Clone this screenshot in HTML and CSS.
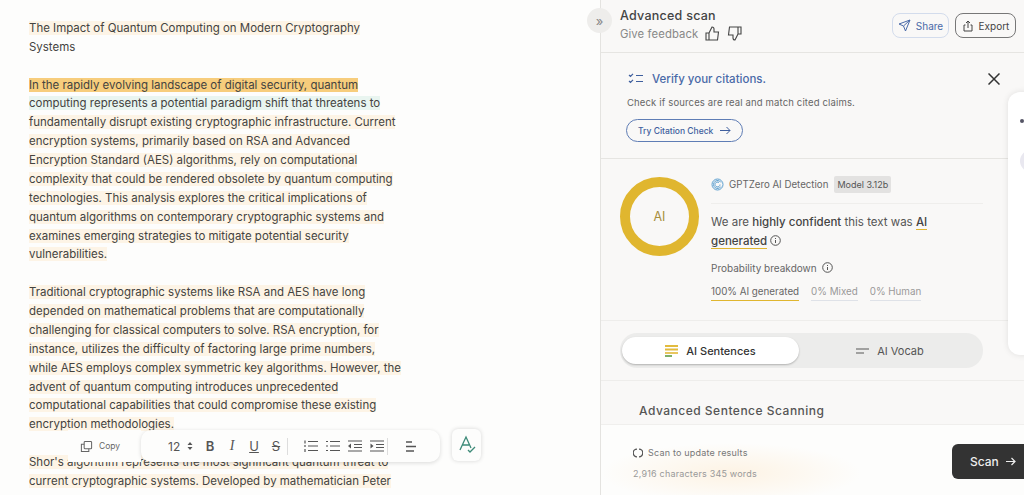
FILE: index.html
```html
<!DOCTYPE html>
<html lang="en">

<head>
    <meta charset="UTF-8">
    <meta name="viewport" content="width=device-width, initial-scale=1.0">
    <title>Advanced scan</title>
    <link rel="stylesheet" href="styles.css">
</head>

<body>
    <div class="page">
        <main class="editor">
            <div class="doc">
                <p><span class="hl">The Impact of Quantum Computing on Modern Cryptography</span><br>Systems</p>
                <p><span class="hl-strong">In the rapidly evolving landscape of digital security, quantum</span><br>
                    <span class="hl-green">computing represents a potential paradigm shift that threatens to</span><br>
                    <span class="hl">fundamentally disrupt existing cryptographic infrastructure. Current</span><br>
                    <span class="hl">encryption systems, primarily based on RSA and Advanced</span><br>
                    <span class="hl">Encryption Standard (AES) algorithms, rely on computational</span><br>
                    <span class="hl">complexity that could be rendered obsolete by quantum computing</span><br>
                    <span class="hl">technologies. This analysis explores the critical implications of</span><br>
                    <span class="hl">quantum algorithms on contemporary cryptographic systems and</span><br>
                    <span class="hl">examines emerging strategies to mitigate potential security</span><br>
                    <span class="hl">vulnerabilities.</span></p>
                <p><span class="hl">Traditional cryptographic systems like RSA and AES have long</span><br>
                    <span class="hl">depended on mathematical problems that are computationally</span><br>
                    <span class="hl">challenging for classical computers to solve. RSA encryption, for</span><br>
                    <span class="hl">instance, utilizes the difficulty of factoring large prime numbers,</span><br>
                    <span class="hl">while AES employs complex symmetric key algorithms. However, the</span><br>
                    <span class="hl">advent of quantum computing introduces unprecedented</span><br>
                    <span class="hl">computational capabilities that could compromise these existing</span><br>
                    <span class="hl">encryption methodologies.</span></p>
                <p><span class="hl">Shor's algorithm represents the most significant quantum threat to</span><br>
                    <span class="hl">current cryptographic systems. Developed by mathematician Peter</span></p>
            </div>

            <div class="toolbar-wrap">
                <div class="copy">
                    <svg width="13" height="13" viewBox="0 0 14 14" fill="none" stroke="#666" stroke-width="1.1"><rect x="4.5" y="1.5" width="8" height="8" rx="1"/><path d="M4.5 4.500h-3v8h8v-3"/></svg>
                    <span>Copy</span>
                </div>
                <div class="toolbar">
                    <span class="size">12 <svg width="6" height="10" viewBox="0 0 6 10" fill="#555"><path d="M3 1l2.500 3h-5zM3 9L.5 6h5z"/></svg></span>
                    <span class="tool bold">B</span>
                    <span class="tool italic">I</span>
                    <span class="tool under">U</span>
                    <span class="tool strike">S</span>
                    <span class="sep"></span>
                    <svg class="ico" width="14" height="12" viewBox="0 0 14 12" stroke="#555" stroke-width="1.2"><path d="M4 1.500h10M4 6h10M4 10.500h10M1 .5v3M1 5v2M1 9v3"/></svg>
                    <svg class="ico" width="14" height="12" viewBox="0 0 14 12" stroke="#555" stroke-width="1.2"><path d="M0 1.500h2M4 1.500h10M0 6h2M4 6h10M0 10.500h2M4 10.500h10"/></svg>
                    <svg class="ico" width="14" height="12" viewBox="0 0 14 12" fill="#555" stroke="#555" stroke-width="1.2"><path d="M0 1h14M6 4.500h8M6 7.500h8M0 11h14"/><path stroke="none" d="M0 6l3-2.500v5z"/></svg>
                    <svg class="ico" width="14" height="12" viewBox="0 0 14 12" fill="#555" stroke="#555" stroke-width="1.2"><path d="M0 1h14M6 4.500h8M6 7.500h8M0 11h14"/><path stroke="none" d="M3.500 6L.5 3.500v5z"/></svg>
                    <span class="sep sep-last"></span>
                    <svg class="ico align" width="12" height="11" viewBox="0 0 12 11" stroke="#555" stroke-width="1.3"><path d="M1 1h6M1 5.500h10M1 10h8"/></svg>
                </div>
                <div class="spell">
                    <svg width="22" height="22" viewBox="0 0 22 22" fill="none" stroke="#3d8a78" stroke-width="1.3"><path d="M4 16L10 3l5 11M6 11h7M12 16l2 2 5-5"/></svg>
                </div>
            </div>
        </main>

        <aside class="panel">
            <button class="collapse">»</button>
            <header class="panel-head">
                <div>
                    <div class="panel-title">Advanced scan</div>
                    <div class="feedback">Give feedback
                        <svg class="thumb" width="15" height="15" viewBox="0 0 15 15" fill="none" stroke="#444" stroke-width="1.1"><path d="M1 7h3v7H1zM4 7l3-6c1.200 0 2 .8 2 2v3h4.500l-1 8H4"/></svg>
                        <svg class="thumb" width="15" height="15" viewBox="0 0 15 15" fill="none" stroke="#444" stroke-width="1.1"><path d="M14 8h-3V1h3zM11 8l-3 6c-1.200 0-2-.8-2-2V9H1.500l1-8H11"/></svg>
                    </div>
                </div>
                <div class="head-btns">
                    <button class="btn-share">
                        <svg width="13" height="13" viewBox="0 0 13 13" fill="none" stroke="#4a6aa8" stroke-width="1"><path d="M12 1L1 5l4.500 2L7.500 12zM12 1L5.500 7"/></svg>
                        Share</button>
                    <button class="btn-export">
                        <svg width="12" height="12" viewBox="0 0 12 12" fill="none" stroke="#444" stroke-width="1"><path d="M3.500 5H2v6h8V5H8.500M6 8V1M4 3l2-2 2 2"/></svg>
                        Export</button>
                </div>
            </header>

            <section class="promo">
                <div class="promo-top">
                    <svg width="16" height="12" viewBox="0 0 16 12" fill="none" stroke="#3f5f9e" stroke-width="1.200"><path d="M1 2l1.500 1.500L5 .8M1 8l1.500 1.500L5 6.800M8 2.500h7M8 8.500h7"/></svg>
                    <span class="promo-title">Verify your citations.</span>
                    <svg class="close" width="12" height="12" viewBox="0 0 12 12" stroke="#333" stroke-width="1.500"><path d="M.5.5l11 11M11.500.5l-11 11"/></svg>
                </div>
                <p class="promo-text">Check if sources are real and match cited claims.</p>
                <button class="btn-try">Try Citation Check
                    <svg width="11" height="9" viewBox="0 0 11 9" fill="none" stroke="#3f5f9e" stroke-width="1"><path d="M0 4.500h10M6.500 1L10 4.500 6.500 8"/></svg>
                </button>
            </section>

            <section class="result">
                <div class="ring">AI</div>
                <div class="result-body">
                    <div class="detect">
                        <svg width="13" height="13" viewBox="0 0 13 13" fill="none" stroke="#5b9fd0" stroke-width="1"><circle cx="6.500" cy="6.500" r="5.500"/><path d="M10 4.500A4 4 0 1 0 10 8.500M9 6.500a2.500 2.500 0 1 1-1-2"/></svg>
                        <span>GPTZero AI Detection</span>
                        <span class="badge">Model 3.12b</span>
                    </div>
                    <p class="verdict">We are <b>highly confident</b> this text was <b class="mark">AI</b><br>
                        <b class="mark">generated</b> <svg class="info" width="11" height="11" viewBox="0 0 11 11" fill="none" stroke="#555"><circle cx="5.500" cy="5.500" r="4.800"/><path d="M5.500 5v3M5.500 3v1"/></svg></p>
                    <div class="breakdown">Probability breakdown <svg class="info" width="11" height="11" viewBox="0 0 11 11" fill="none" stroke="#555"><circle cx="5.500" cy="5.500" r="4.800"/><path d="M5.500 5v3M5.500 3v1"/></svg></div>
                    <div class="probs">
                        <span class="prob active">100% AI generated</span>
                        <span class="prob">0% Mixed</span>
                        <span class="prob">0% Human</span>
                    </div>
                </div>
            </section>

            <section class="tabs-row">
                <div class="tabs">
                    <div class="tab on">
                        <svg width="13" height="12" viewBox="0 0 13 12" stroke-width="2"><path d="M0 1h13" stroke="#e2bb3e"/><path d="M0 4.500h13" stroke="#e2bb3e"/><path d="M0 8h13" stroke="#e8c65e"/><path d="M0 11h7" stroke="#7fb069"/></svg>
                        AI Sentences</div>
                    <div class="tab">
                        <svg width="13" height="6" viewBox="0 0 13 6" stroke="#888" stroke-width="1.300"><path d="M0 1h13M0 5h8"/></svg>
                        AI Vocab</div>
                </div>
            </section>

            <h2 class="scan-title">Advanced Sentence Scanning</h2>

            <footer class="scanbar">
                <div class="scan-info">
                    <div class="scan-note"><svg width="10" height="10" viewBox="0 0 10 10" fill="none" stroke="#555" stroke-width="1.300"><path d="M4 1.200A3.800 3.800 0 0 0 4 8.800M6 1.200A3.800 3.800 0 0 1 6 8.800"/></svg> Scan to update results</div>
                    <div class="scan-count">2,916 characters 345 words</div>
                </div>
                <button class="btn-scan">Scan
                    <svg width="10" height="9" viewBox="0 0 10 9" fill="none" stroke="#eee" stroke-width="1.200"><path d="M0 4.500h9M5.500 1L9 4.500 5.500 8"/></svg>
                </button>
            </footer>

            <div class="float-card">
                <span class="float-dot"></span>
                <span class="float-ring"></span>
            </div>
        </aside>
    </div>
</body>

</html>
```
FILE: styles.css
```css
* {
    box-sizing: border-box;
}

body {
    margin: 0;
    height: 495px;
    overflow: hidden;
    font-family: Inter, 'Liberation Sans', sans-serif;
    color: #3a3a38;
    background-color: #fdfdfc;
}

button {
    font-family: inherit;
    cursor: pointer;
}

.page {
    display: flex;
    height: 495px;
}

.editor {
    position: relative;
    width: 600px;
    overflow: hidden;
}

.doc {
    padding: 19px 0 0 29px;
    font-size: 11.480px;
    line-height: 18.870px;
    color: #444340;
    white-space: nowrap;
}

.doc p {
    margin: 0 0 18.870px;
}

.hl {
    background-color: #fdf4e6;
}

.hl-strong {
    background-color: #f7cd7c;
}

.hl-green {
    background-color: #e9f5f0;
}

.toolbar-wrap {
    position: absolute;
    left: 68px;
    top: 430px;
    display: flex;
    align-items: flex-start;
}

.copy {
    display: flex;
    align-items: center;
    gap: 6px;
    width: 73px;
    height: 32px;
    padding-left: 12px;
    font-size: 8.500px;
    color: #666;
    background-color: #fdfdfc;
}

.toolbar {
    display: flex;
    align-items: center;
    gap: 8px;
    width: 299px;
    height: 32px;
    padding-left: 27px;
    background-color: #fdfdfc;
    border-radius: 10px;
    box-shadow: 0 1px 4px rgba(0, 0, 0, 0.14);
    font-size: 12px;
    color: #555;
}

.size {
    display: flex;
    align-items: center;
    gap: 7px;
    width: 27px;
    flex: none;
}

.size svg {
    flex: none;
}

.tool {
    flex: none;
    width: 14px;
    font-size: 13px;
    text-align: center;
}

.bold {
    font-weight: 600;
}

.italic {
    font-family: 'Liberation Serif', serif;
    font-style: italic;
    font-size: 14px;
}

.under {
    text-decoration: underline;
}

.strike {
    text-decoration: line-through;
}

.sep {
    flex: none;
    width: 1px;
    height: 17px;
    background-color: #ddd;
    margin-left: -4px;
    margin-right: 8px;
}

.sep-last {
    margin-left: -5px;
    margin-right: 0;
}

.ico {
    flex: none;
}

.align {
    margin-left: 9px;
}

.spell {
    display: flex;
    align-items: center;
    justify-content: center;
    width: 29px;
    height: 32px;
    margin-top: -1px;
    margin-left: 12px;
    background-color: #fdfdfc;
    border-radius: 6px;
    box-shadow: 0 0 4px rgba(0, 0, 0, 0.16);
}

.panel {
    position: relative;
    flex: 1;
    background-color: #f9f8f7;
    border-left: 1px solid #e4e3e0;
}

.collapse {
    position: absolute;
    left: -14px;
    top: 8px;
    width: 25px;
    height: 25px;
    padding: 0;
    border: none;
    border-radius: 50%;
    background-color: #eeedeb;
    color: #888;
    font-size: 13px;
    line-height: 22px;
}

.panel-head {
    display: flex;
    justify-content: space-between;
    height: 53px;
    padding: 8px 8px 0 19px;
    border-bottom: 1px solid #e6e5e2;
}

.panel-title {
    font-size: 12.500px;
    font-weight: 500;
    letter-spacing: 0.25px;
    color: #444;
}

.feedback {
    display: flex;
    align-items: center;
    gap: 7px;
    margin-top: 3px;
    font-size: 11.300px;
    letter-spacing: 0.1px;
    color: #888;
}

.thumb {
    flex: none;
}

.head-btns {
    display: flex;
    gap: 6px;
    margin-top: 5px;
}

.head-btns button {
    display: flex;
    align-items: center;
    justify-content: center;
    gap: 5px;
    height: 25px;
    padding: 0;
    font-size: 10px;
    border-radius: 8px;
    background-color: transparent;
}

.btn-share {
    width: 57px;
    color: #4a6aa8;
    border: 1px solid #d3dcec;
}

.btn-export {
    width: 61px;
    color: #444;
    border: 1px solid #777;
}

.promo {
    height: 106px;
    padding: 19px 24px 0 27px;
    border-bottom: 1px solid #e6e5e2;
}

.promo-top {
    display: flex;
    align-items: center;
    gap: 8px;
}

.promo-title {
    font-size: 11.500px;
    font-weight: 500;
    color: #4a6aa8;
}

.close {
    margin-left: auto;
}

.promo-text {
    margin: 11px 0 11px -1px;
    font-size: 9.500px;
    letter-spacing: 0.15px;
    color: #666;
}

.btn-try {
    display: flex;
    align-items: center;
    gap: 7px;
    height: 23px;
    margin-left: -2px;
    padding: 0 11px;
    font-size: 8.500px;
    font-weight: 500;
    color: #3f5f9e;
    background-color: transparent;
    border: 1px solid #5f7db5;
    border-radius: 12px;
}

.result {
    display: flex;
    gap: 12px;
    height: 162px;
    padding: 18px 0 0 19px;
    border-bottom: 1px solid #eeedeb;
}

.ring {
    display: flex;
    align-items: center;
    justify-content: center;
    flex: none;
    width: 79px;
    height: 79px;
    border: 10px solid #e0b62f;
    border-radius: 50%;
    font-size: 12.500px;
    color: #a88f3c;
}

.result-body {
    width: 272px;
}

.detect {
    display: flex;
    align-items: center;
    gap: 5px;
    height: 20px;
    font-size: 9.700px;
    color: #666;
    padding-bottom: 5px;
}

.badge {
    padding: 3px 3px;
    margin-left: 1px;
    font-size: 9px;
    background-color: #e3e2e1;
    border-radius: 2px;
    color: #555;
}

.verdict {
    margin: 6px 0 0;
    padding-top: 9px;
    border-top: 1px solid #efeeec;
    font-size: 11.500px;
    line-height: 19px;
    color: #555;
}

.verdict b {
    font-weight: 500;
    color: #444;
}

.mark {
    border-bottom: 1px solid #e0b62f;
}

.info {
    vertical-align: -1px;
}

.breakdown {
    margin-top: 11px;
    font-size: 10px;
    color: #666;
}

.breakdown .info {
    margin-left: 3px;
}

.probs {
    display: flex;
    gap: 12px;
    margin-top: 12px;
    font-size: 9.800px;
    color: #999;
}

.prob {
    padding-bottom: 3px;
    border-bottom: 1px solid #dfe2e8;
}

.prob.active {
    color: #666;
    border-bottom-color: #e0b62f;
}

.tabs-row {
    height: 60px;
    padding: 12px 0 0 19px;
    border-bottom: 1px solid #eeedeb;
}

.tabs {
    display: flex;
    width: 363px;
    height: 35px;
    padding: 4px 2px;
    background-color: #ececeb;
    border-radius: 17px;
}

.tab {
    display: flex;
    align-items: center;
    justify-content: center;
    gap: 8px;
    flex: 1;
    font-size: 11px;
    color: #555;
}

.tab.on {
    flex: none;
    width: 177px;
    font-weight: 500;
    color: #333;
    background-color: #fff;
    border-radius: 15px;
    box-shadow: 0 1px 2px rgba(0, 0, 0, 0.25);
}

.scan-title {
    margin: 0;
    padding: 22px 0 0 38px;
    font-size: 12px;
    font-weight: 500;
    letter-spacing: 0.5px;
    color: #555;
}

.scanbar {
    position: absolute;
    left: 0;
    right: 0;
    bottom: 0;
    display: flex;
    justify-content: space-between;
    height: 71px;
    padding: 22px 0 0 32px;
    background: radial-gradient(ellipse 130px 30px at 130px 48px, #fdf3e4, transparent), #fdfdfc;
    border-top: 1px solid #f0efed;
}

.scan-note {
    display: flex;
    align-items: center;
    gap: 5px;
    font-size: 9px;
    letter-spacing: 0.2px;
    color: #777;
}

.scan-count {
    margin-top: 10px;
    font-size: 9px;
    letter-spacing: 0.2px;
    color: #999;
}

.btn-scan {
    display: flex;
    align-items: center;
    gap: 7px;
    width: 72px;
    height: 35px;
    margin-top: -3px;
    padding: 0 0 0 18px;
    border: none;
    border-radius: 6px 0 0 6px;
    font-size: 12px;
    font-weight: 500;
    color: #eee;
    background-color: #333;
}

.float-card {
    position: absolute;
    left: 407px;
    top: 92px;
    width: 40px;
    height: 263px;
    background-color: #fff;
    border-radius: 12px;
    box-shadow: 0 0 6px rgba(0, 0, 0, 0.1);
}

.float-dot {
    position: absolute;
    left: 12px;
    top: 27px;
    width: 4px;
    height: 4px;
    border-radius: 50%;
    background-color: #556;
}

.float-ring {
    position: absolute;
    left: 12px;
    top: 58px;
    width: 22px;
    height: 22px;
    border-radius: 50%;
    background-color: #e9e8f0;
}
```
